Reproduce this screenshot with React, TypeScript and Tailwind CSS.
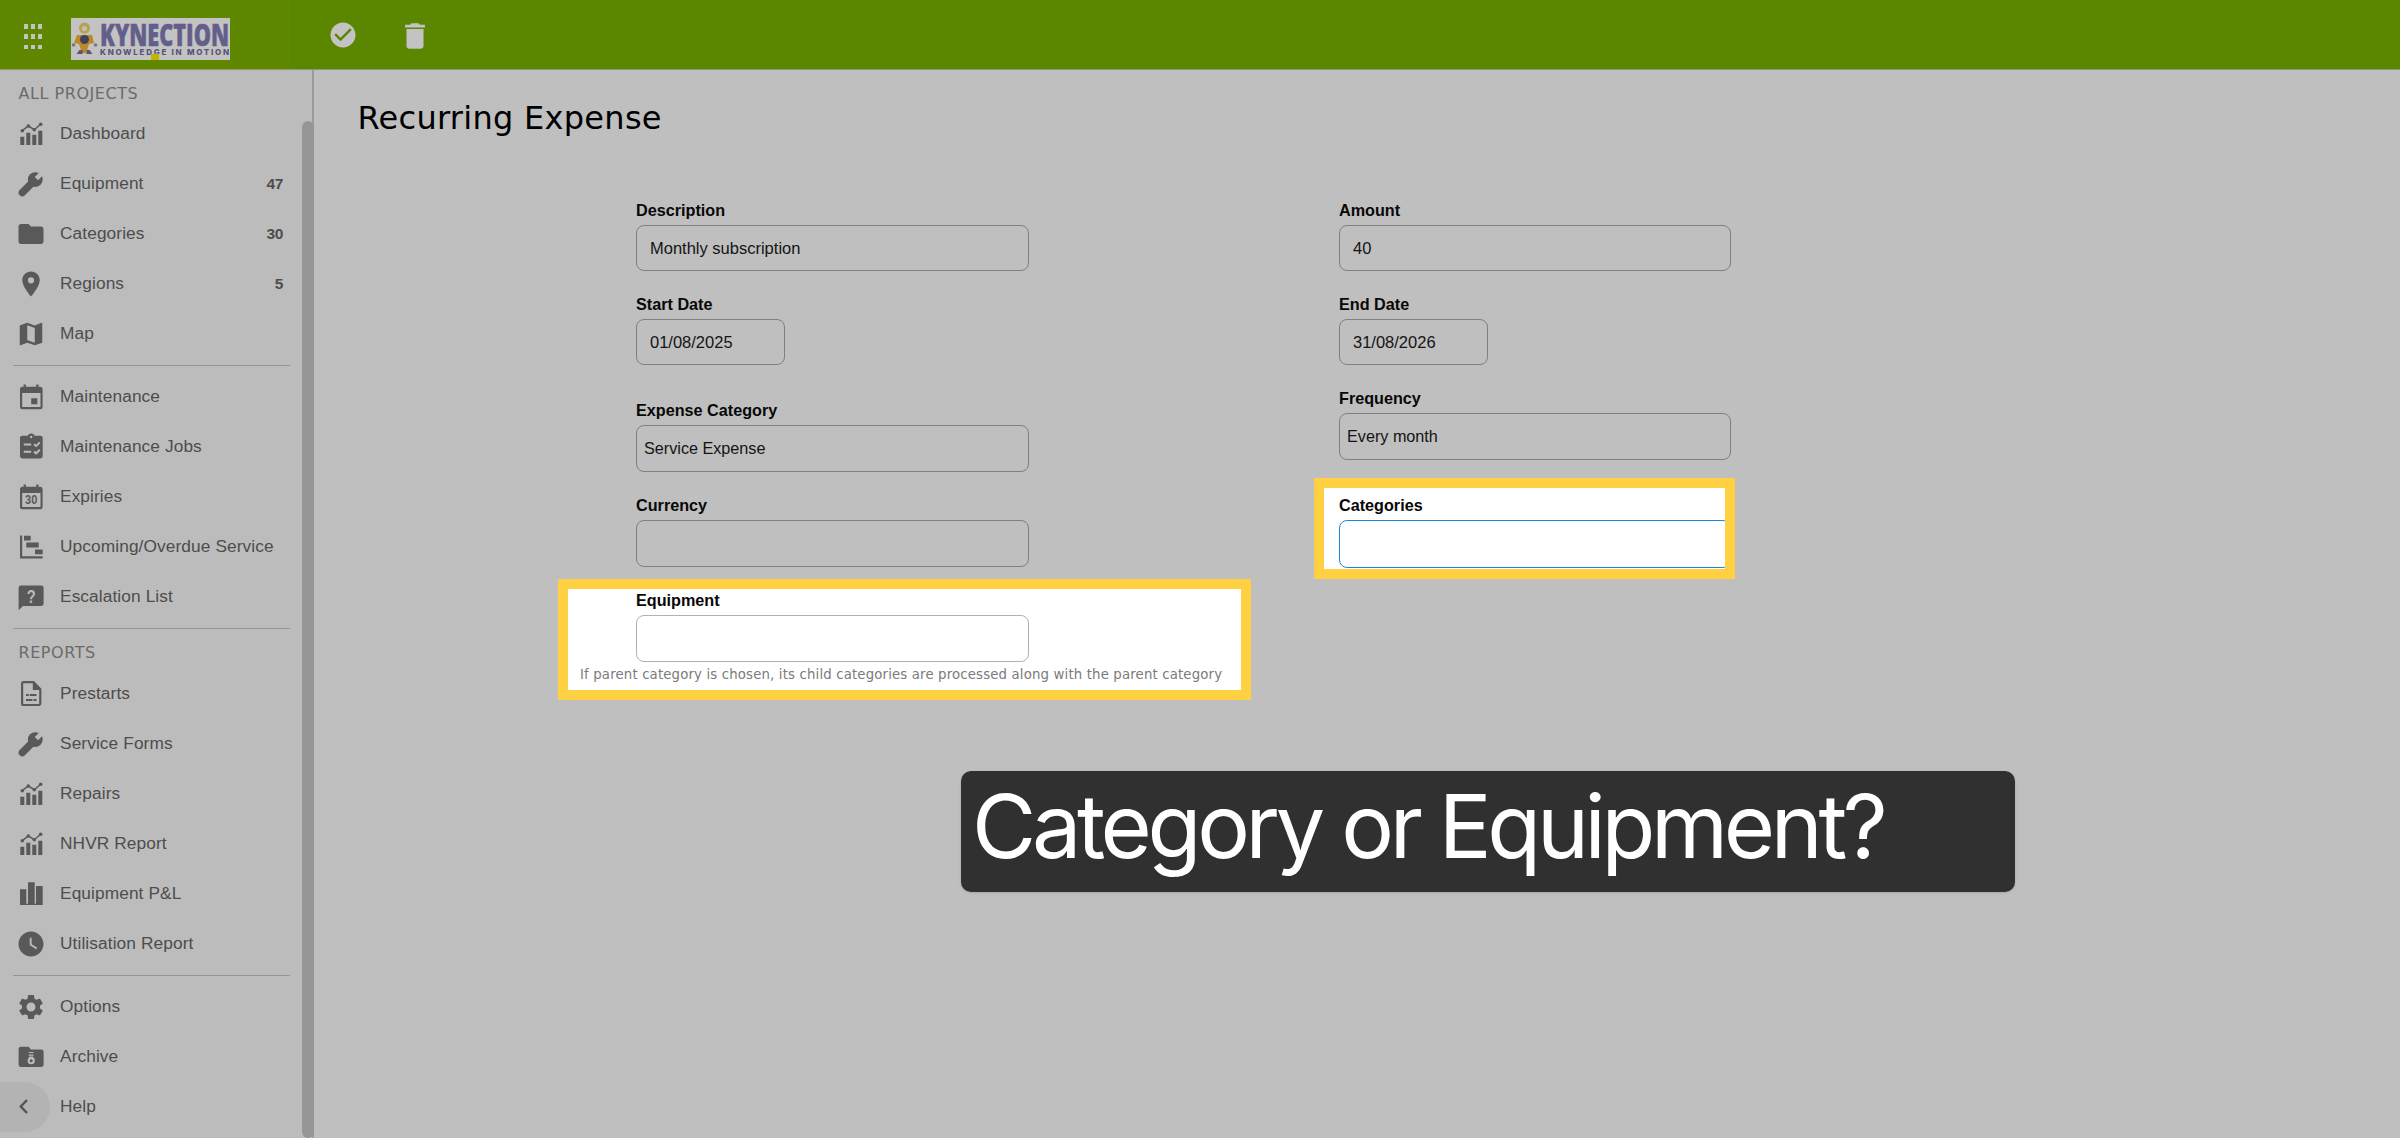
import type { ReactNode } from 'react';
import { MdCheckCircle, MdDelete, MdFolder, MdMap, MdPlace, MdSettings, MdWatchLater } from 'react-icons/md';

interface NavEntry {
  label: string;
  icon: ReactNode;
  count?: number;
}

function Glyph({ children }: { children: ReactNode }) {
  return (
    <svg width="30" height="30" viewBox="0 0 30 30" fill="currentColor">
      {children}
    </svg>
  );
}

function ChartIcon() {
  return (
    <Glyph>
      <path d="M4.3 17.7h4V26h-4zM10.3 13.7h4V26h-4zM16.3 15.7h4V26h-4zM22.3 11.7h4V26h-4z" />
      <path d="M6.3 11.7L12.3 7l6 3.7 6.4-5.4" fill="none" stroke="currentColor" strokeWidth="1.5" />
      <circle cx="6.3" cy="11.7" r="1.8" />
      <circle cx="12.3" cy="7" r="1.8" />
      <circle cx="18.3" cy="10.7" r="1.8" />
      <circle cx="24.7" cy="5.3" r="1.8" />
    </Glyph>
  );
}

function WrenchIcon() {
  return (
    <Glyph>
      <path d="M6.3 23.6L17 12.9" stroke="currentColor" strokeWidth="7.4" strokeLinecap="round" />
      <circle cx="19.3" cy="10.6" r="7.4" />
      <path d="M20.4 9.6L26.4 3.6" stroke="#bcbcbc" strokeWidth="4.6" />
    </Glyph>
  );
}

function CalendarIcon({ days }: { days?: boolean }) {
  return (
    <Glyph>
      <path
        fillRule="evenodd"
        d="M7.6 2.5h2.3v2.3h10.3V2.5h2.3v2.3h1.6a2.5 2.5 0 0 1 2.5 2.5v17.4a2.5 2.5 0 0 1-2.5 2.5H6.5A2.5 2.5 0 0 1 4 24.7V7.3a2.5 2.5 0 0 1 2.5-2.5h1.1zM6.2 10.9v14.2h18.3V10.9z"
      />
      {days ? (
        <text x="15.3" y="22.3" fontSize="12" fontWeight="700" textAnchor="middle" textLength="12.5" lengthAdjust="spacingAndGlyphs">
          30
        </text>
      ) : (
        <path d="M15.2 16.2h6.1v6.1h-6.1z" />
      )}
    </Glyph>
  );
}

function JobsIcon() {
  return (
    <Glyph>
      <rect x="4" y="3.8" width="22.7" height="22.6" rx="2.3" />
      <circle cx="15.2" cy="4.8" r="3.3" />
      <circle cx="15.2" cy="5" r="1.2" fill="#bcbcbc" />
      <path
        d="M7.7 12.5h7.5M7.7 19.8h7.5M18 12.3l2.2 1.7 3.6-3.6M18 19.6l2.2 1.7 3.6-3.6"
        fill="none"
        stroke="#bcbcbc"
        strokeWidth="2"
      />
    </Glyph>
  );
}

function GanttIcon() {
  return (
    <Glyph>
      <path d="M4 3.5h2.2v20.8h20.5v2.2H4zM8 3.7h6.7v4.9H8zM10.3 10.5h12.4v5H10.3zM19 17.5h7.7v4.8H19z" />
    </Glyph>
  );
}

function QuestionIcon() {
  return (
    <Glyph>
      <path d="M5 3.5h20.2a2.4 2.4 0 0 1 2.4 2.4v15.6a2.4 2.4 0 0 1-2.4 2.4H7L2.6 28.3V5.9A2.4 2.4 0 0 1 5 3.5z" />
      <text x="15.2" y="21" fontSize="19" fontWeight="700" textAnchor="middle" fill="#bcbcbc" textLength="9" lengthAdjust="spacingAndGlyphs">
        ?
      </text>
    </Glyph>
  );
}

function PrestartIcon() {
  return (
    <Glyph>
      <path
        d="M7.6 3.1h9.9l6.8 7v14.4a1.5 1.5 0 0 1-1.5 1.5H7.6a1.5 1.5 0 0 1-1.5-1.5V4.6a1.5 1.5 0 0 1 1.5-1.5z"
        fill="none"
        stroke="currentColor"
        strokeWidth="2.2"
      />
      <path d="M16.8 3v8h8zM10 15h2.7v2H10zM13.7 15h6.8v2h-6.8zM10 20h6.5v2H10zM17.5 20h3v2h-3z" />
    </Glyph>
  );
}

function BarsIcon() {
  return (
    <Glyph>
      <path d="M4 10.3h6.3v14.4H12V3.3h6.7v21.4H20V7h6.7v19H4z" />
    </Glyph>
  );
}

function ArchiveIcon() {
  return (
    <Glyph>
      <path d="M5 4.8h7.5L15 7.4h10.2a2.4 2.4 0 0 1 2.4 2.4v12.9a2.4 2.4 0 0 1-2.4 2.4H5a2.4 2.4 0 0 1-2.4-2.4V7.2A2.4 2.4 0 0 1 5 4.8z" />
      <path d="M12.8 10.5h4.8M12.8 13.1h4.8" stroke="#bcbcbc" strokeWidth="1.2" />
      <path d="M13.5 14.5h3.4l1.3 3.5h-6z" fill="#bcbcbc" />
      <circle cx="15.2" cy="18.7" r="3.6" fill="#bcbcbc" />
      <circle cx="15.2" cy="18.7" r="1.5" />
    </Glyph>
  );
}

const projectLinks: NavEntry[] = [
  { label: 'Dashboard', icon: <ChartIcon /> },
  { label: 'Equipment', icon: <WrenchIcon />, count: 47 },
  { label: 'Categories', icon: <MdFolder size={30} />, count: 30 },
  { label: 'Regions', icon: <MdPlace size={30} />, count: 5 },
  { label: 'Map', icon: <MdMap size={30} /> },
];

const serviceLinks: NavEntry[] = [
  { label: 'Maintenance', icon: <CalendarIcon /> },
  { label: 'Maintenance Jobs', icon: <JobsIcon /> },
  { label: 'Expiries', icon: <CalendarIcon days /> },
  { label: 'Upcoming/Overdue Service', icon: <GanttIcon /> },
  { label: 'Escalation List', icon: <QuestionIcon /> },
];

const reportLinks: NavEntry[] = [
  { label: 'Prestarts', icon: <PrestartIcon /> },
  { label: 'Service Forms', icon: <WrenchIcon /> },
  { label: 'Repairs', icon: <ChartIcon /> },
  { label: 'NHVR Report', icon: <ChartIcon /> },
  { label: 'Equipment P&L', icon: <BarsIcon /> },
  { label: 'Utilisation Report', icon: <MdWatchLater size={30} /> },
];

const systemLinks: NavEntry[] = [
  { label: 'Options', icon: <MdSettings size={30} /> },
  { label: 'Archive', icon: <ArchiveIcon /> },
];

function NavList({ items }: { items: NavEntry[] }) {
  return (
    <>
      {items.map((item) => (
        <a key={item.label} className="flex h-[50px] items-center pl-4 pr-[19px] text-[17.3px] tracking-[0.1px] text-[#4d4d4d]">
          <span className="flex size-[30px] items-center justify-center text-[#595959]">{item.icon}</span>
          <span className="ml-3.5 flex-1 whitespace-nowrap">{item.label}</span>
          {item.count !== undefined && <span className="text-[15.5px] font-bold tracking-[-0.4px]">{item.count}</span>}
        </a>
      ))}
    </>
  );
}

function Divider() {
  return (
    <div className="flex h-[13.3px] items-center pl-[12.5px] pr-3">
      <div className="h-px w-full bg-[#959595]" />
    </div>
  );
}

function Logo() {
  return (
    <svg width="159" height="42" viewBox="0 0 159 42" className="overflow-visible bg-[#c3c3c3]">
      <circle cx="13.5" cy="10" r="5.5" fill="#b9a24c" />
      <circle cx="13.5" cy="10.5" r="2.6" fill="#bdbdc4" />
      <path d="M6 17h15l2 8-5 1-3 9h-4l-3-9-5-1z" fill="#b98a25" />
      <circle cx="13.5" cy="21.5" r="4.5" fill="#43405c" />
      <path d="M5.5 36l3-4h3v4zM15.5 36v-4h3l3 4z" fill="#5a5568" />
      <circle cx="2.5" cy="27" r="1.8" fill="#77748e" />
      <circle cx="24.5" cy="27" r="1.8" fill="#77748e" />
      <text x="29" y="27.5" fontFamily="Open Sans" fontWeight="800" fontSize="30" fill="#62608a" stroke="#62608a" strokeWidth="0.5" textLength="129" lengthAdjust="spacingAndGlyphs">
        KYNECTION
      </text>
      <text x="29" y="37" fontFamily="Inter" fontWeight="800" fontSize="8" fill="#57547c" textLength="129" lengthAdjust="spacing">
        KNOWLEDGE IN MOTION
      </text>
      <rect x="80" y="36" width="8" height="6" fill="#c2b500" />
    </svg>
  );
}

interface FieldProps {
  label: string;
  value?: string;
  className?: string;
  boxClassName?: string;
}

function Field({ label, value, className = '', boxClassName = '' }: FieldProps) {
  return (
    <div className={className}>
      <label className="block h-[25px] text-[16.2px] font-bold leading-5 text-[#080808]">{label}</label>
      <div className={`flex items-center rounded-lg border text-[#141414] ${boxClassName}`}>{value}</div>
    </div>
  );
}

export default function App() {
  return (
    <div className="relative flex h-[1138px] w-[2400px] flex-col overflow-hidden bg-[#bfbfbf] font-['Liberation_Sans',sans-serif]">
      <header className="flex h-[70px] shrink-0 border-b border-[#8b9874] bg-[#5b8700] text-[#c3c3c3]">
        <div className="flex w-[290px] bg-[#608700] pl-[23.5px]">
          <div className="mt-6 grid h-[25px] w-[21.5px] grid-cols-3 content-between justify-between">
            {Array.from({ length: 9 }, (_, i) => (
              <span key={i} className="size-[4.5px] bg-current" />
            ))}
          </div>
          <div className="ml-[26px] mt-[18px]">
            <Logo />
          </div>
        </div>
        <MdCheckCircle size={30} className="ml-[37.5px] mt-5" />
        <MdDelete size={34} className="ml-[40.5px] mt-[19px]" />
      </header>

      <div className="flex flex-1">
        <aside className="flex w-[314px] shrink-0 bg-[#bcbcbc]">
          <nav className="w-[302px]">
            <h2 className="flex h-[39px] items-center pl-[18.5px] pt-2 font-['DejaVu_Sans',sans-serif] text-[16px] tracking-[0.55px] text-[#6b6b6b]">
              ALL PROJECTS
            </h2>
            <NavList items={projectLinks} />
            <Divider />
            <NavList items={serviceLinks} />
            <Divider />
            <h2 className="flex h-[33px] items-center pl-[18.5px] pt-0.5 font-['DejaVu_Sans',sans-serif] text-[16px] tracking-[0.55px] text-[#6b6b6b]">
              REPORTS
            </h2>
            <NavList items={reportLinks} />
            <Divider />
            <NavList items={systemLinks} />
            <div className="flex h-[50px] items-center">
              <button type="button" className="flex h-[50px] w-[50px] items-center rounded-r-full bg-[#b3b3b3] pl-[19px]" aria-label="Collapse">
                <svg width="9" height="15" viewBox="0 0 9 15" fill="none" stroke="#555" strokeWidth="2.5">
                  <path d="M8 1L1.8 7.5 8 14" />
                </svg>
              </button>
              <span className="pl-2.5 text-[17.3px] tracking-[0.1px] text-[#4d4d4d]">Help</span>
            </div>
          </nav>
          <div className="flex w-3 flex-col border-r-2 border-[#9b9b9b] pt-[51px]">
            <div className="-mr-0.5 flex-1 rounded-full bg-[#969696]" />
          </div>
        </aside>

        <main className="flex-1">
          <h1 className="ml-[43.5px] mt-[28px] font-['DejaVu_Sans',sans-serif] text-[32px] leading-10 tracking-[0.28px] text-black">
            Recurring Expense
          </h1>

          <form className="ml-[244px] mt-[62px] flex items-start gap-[63px]">
            <div className="w-[693px]">
              <div className="pl-[78px]">
                <Field label="Description" value="Monthly subscription" boxClassName="h-[46px] w-[393px] border-[#7f7f84] px-[13px] text-[16.5px]" />
                <Field label="Start Date" value="01/08/2025" className="mt-[23px]" boxClassName="h-[46px] w-[149px] border-[#7f7f84] px-[13px] text-[16.5px]" />
                <Field label="Expense Category" value="Service Expense" className="mt-[35px]" boxClassName="h-[47px] w-[393px] border-[#7f7f84] px-[7px] text-[16.2px]" />
                <Field label="Currency" className="mt-[23px]" boxClassName="h-[47px] w-[393px] border-[#7f7f84]" />
              </div>
              <div className="mt-3 h-[121px] border-[10px] border-[#ffd142] bg-white pt-px">
                <Field label="Equipment" className="pl-[68px]" boxClassName="h-[47px] w-[393px] border-[#b0b0b5]" />
                <p className="mt-[3px] whitespace-nowrap pl-3 font-['DejaVu_Sans',sans-serif] text-[13.3px] leading-5 tracking-[0.15px] text-[#7b7b7b]">
                  If parent category is chosen, its child categories are processed along with the parent category
                </p>
              </div>
            </div>

            <div className="w-[421px]">
              <div className="pl-[25px]">
                <Field label="Amount" value="40" boxClassName="h-[46px] w-[392px] border-[#7f7f84] px-[13px] text-[16.5px]" />
                <Field label="End Date" value="31/08/2026" className="mt-[23px]" boxClassName="h-[46px] w-[149px] border-[#7f7f84] px-[13px] text-[16.5px]" />
                <Field label="Frequency" value="Every month" className="mt-[23px]" boxClassName="h-[47px] w-[392px] border-[#7f7f84] px-[7px] text-[16.2px]" />
              </div>
              <div className="mt-[18px] h-[101px] overflow-hidden border-[10px] border-[#ffd142] bg-white pt-[7px]">
                <Field label="Categories" className="pl-[15px]" boxClassName="h-[48px] w-[392px] border-[#1f86d9]" />
              </div>
            </div>
          </form>
        </main>
      </div>

      <div className="absolute left-[961px] top-[771px] flex h-[121px] w-[1054px] items-center rounded-[10px] bg-[#303030] pb-[11px] pl-[11px] font-['Inter',sans-serif] text-[88px] tracking-[-4.35px] text-white shadow-sm">
        Category or Equipment?
      </div>
    </div>
  );
}
